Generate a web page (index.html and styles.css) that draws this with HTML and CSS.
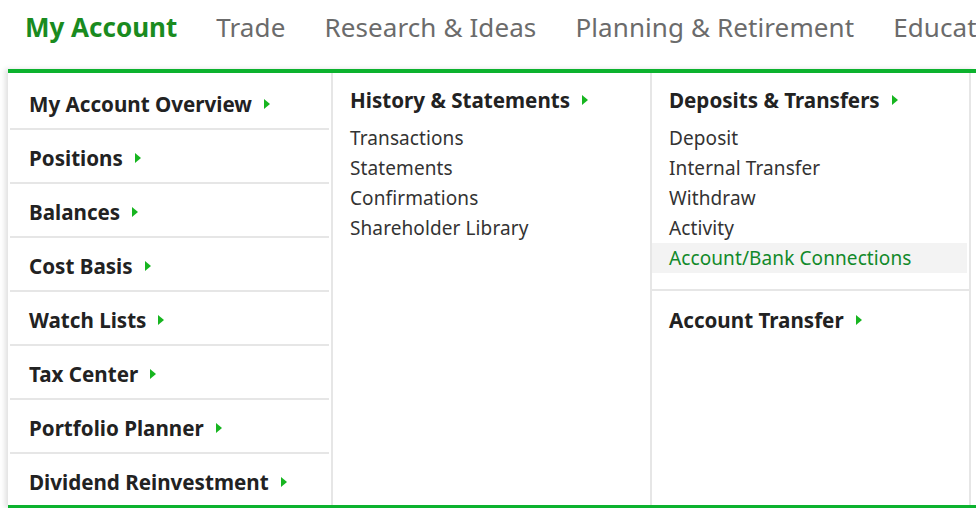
FILE: index.html
```html
<!DOCTYPE html>
<html>
<head>
<meta charset="utf-8">
<link rel="stylesheet" href="styles.css">
</head>
<body>
<nav class="topnav">
  <a class="nav-item active">My Account</a>
  <a class="nav-item">Trade</a>
  <a class="nav-item">Research &amp; Ideas</a>
  <a class="nav-item">Planning &amp; Retirement</a>
  <a class="nav-item">Education</a>
</nav>
<div class="panel">
  <div class="col col-main">
    <div class="row"><span class="title">My Account Overview</span><span class="arrow"></span></div>
    <div class="row"><span class="title">Positions</span><span class="arrow"></span></div>
    <div class="row"><span class="title">Balances</span><span class="arrow"></span></div>
    <div class="row"><span class="title">Cost Basis</span><span class="arrow"></span></div>
    <div class="row"><span class="title">Watch Lists</span><span class="arrow"></span></div>
    <div class="row"><span class="title">Tax Center</span><span class="arrow"></span></div>
    <div class="row"><span class="title">Portfolio Planner</span><span class="arrow"></span></div>
    <div class="row"><span class="title">Dividend Reinvestment</span><span class="arrow"></span></div>
  </div>
  <div class="col col-sub">
    <div class="group">
      <div class="heading"><span class="title">History &amp; Statements</span><span class="arrow"></span></div>
      <ul class="links">
        <li>Transactions</li>
        <li>Statements</li>
        <li>Confirmations</li>
        <li>Shareholder Library</li>
      </ul>
    </div>
  </div>
  <div class="col col-sub">
    <div class="group">
      <div class="heading"><span class="title">Deposits &amp; Transfers</span><span class="arrow"></span></div>
      <ul class="links">
        <li>Deposit</li>
        <li>Internal Transfer</li>
        <li>Withdraw</li>
        <li>Activity</li>
        <li class="hover">Account/Bank Connections</li>
      </ul>
    </div>
    <div class="group group-sep">
      <div class="heading"><span class="title">Account Transfer</span><span class="arrow"></span></div>
    </div>
  </div>
  <div class="col-rest"></div>
</div>
</body>
</html>
```
FILE: styles.css
```css
html, body {
  margin: 0;
  padding: 0;
  background: #fff;
  overflow: hidden;
  width: 976px;
  height: 508px;
}
body {
  font-family: "Noto Sans", "Open Sans", sans-serif;
  color: #222;
}
.topnav {
  display: flex;
  gap: 39px;
  padding-left: 25px;
  height: 69px;
  align-items: flex-start;
  white-space: nowrap;
  overflow: hidden;
}
.nav-item {
  font-size: 26px;
  line-height: 34px;
  margin-top: 10px;
  color: #6b6b6b;
  letter-spacing: 0.1px;
  flex: none;
}
.nav-item.active {
  color: #1a8b1f;
  font-weight: 700;
  letter-spacing: 0;
}
.panel {
  margin-left: 8px;
  width: 968px;
  height: 432px;
  border-top: 4px solid #0cb22e;
  border-bottom: 3px solid #0cb22e;
  display: flex;
  box-shadow: -3px 0 5px rgba(0,0,0,0.12);
  background: #fff;
}
.col {
  border-right: 2px solid #e6e6e6;
  box-sizing: border-box;
}
.col-main {
  width: 325px;
  padding: 3px 2px 0 2px;
}
.col-sub {
  width: 319px;
  padding-top: 15px;
}
.col-rest {
  flex: 1;
}
.row {
  box-sizing: border-box;
  height: 54px;
  padding: 16px 0 0 19px;
  border-bottom: 2px solid #e6e6e6;
  display: flex;
  align-items: flex-start;
}
.row:last-child {
  border-bottom: none;
}
.title {
  font-size: 20.6px;
  line-height: 24px;
  font-weight: 700;
  color: #222;
}
.arrow {
  width: 0;
  height: 0;
  border-top: 5px solid transparent;
  border-bottom: 5px solid transparent;
  border-left: 6px solid #17b520;
  margin-left: 12px;
  margin-top: 7px;
}
.heading {
  display: flex;
  align-items: flex-start;
  padding-left: 17px;
}
.links {
  list-style: none;
  margin: 11px 0 0 0;
  padding: 0;
}
.links li {
  font-size: 19px;
  line-height: 30px;
  letter-spacing: 0.1px;
  color: #333;
  padding-left: 17px;
}
.links li.hover {
  background: #f3f3f3;
  color: #11892a;
  margin-right: 2px;
}
.group-sep {
  margin-top: 16px;
  border-top: 2px solid #e6e6e6;
  padding-top: 17px;
}
```
